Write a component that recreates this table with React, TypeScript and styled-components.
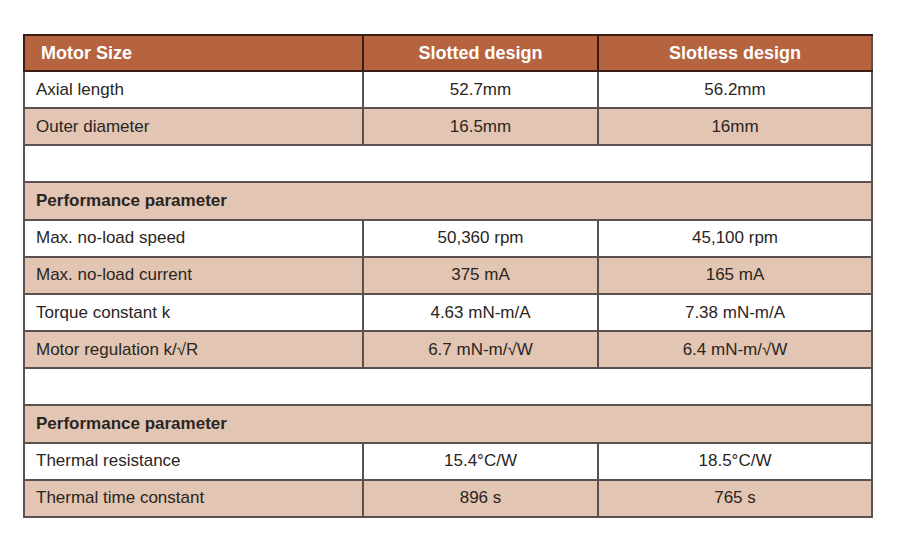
import React from "react";
import styled, { createGlobalStyle } from "styled-components";

const Global = createGlobalStyle`
  html, body { margin: 0; padding: 0; background: #ffffff; }
  body { font-family: "Liberation Sans", Arial, sans-serif; }
`;

const Page = styled.div`
  width: 900px;
  height: 550px;
  box-sizing: border-box;
  padding: 34px 0 0 23px;
`;

const Table = styled.table`
  width: 848px;
  table-layout: fixed;
  border-collapse: collapse;
  border: 2px solid #5a5150;
  color: #2a2523;
`;

const HeadRow = styled.tr`
  height: 36px;
  background: #b6633f;
  border-top: 2px solid #3a1d14;
  border-bottom: 2px solid #3a1d14;
`;

const HeadCell = styled.th<{ $left?: boolean }>`
  color: #ffffff;
  font-size: 18px;
  font-weight: 700;
  text-align: ${(p) => (p.$left ? "left" : "center")};
  padding: 0 0 0 ${(p) => (p.$left ? "16px" : "0")};
  border-left: 2px solid #3a1d14;
`;

const Row = styled.tr<{ $tint?: boolean }>`
  height: 37.17px;
  background: ${(p) => (p.$tint ? "#e2c5b2" : "#ffffff")};
  border-top: 2px solid #5a5150;
`;

const LabelCell = styled.td`
  font-size: 17px;
  padding: 0 0 0 11px;
  text-align: left;
  border-left: 2px solid #5a5150;
`;

const ValueCell = styled.td`
  font-size: 17px;
  text-align: center;
  border-left: 2px solid #5a5150;
`;

const SectionCell = styled.td`
  font-size: 17px;
  font-weight: 700;
  padding: 0 0 0 11px;
`;

type DataRow = [string, string, string];

const group1: DataRow[] = [
  ["Axial length", "52.7mm", "56.2mm"],
  ["Outer diameter", "16.5mm", "16mm"],
];

const group2: DataRow[] = [
  ["Max. no-load speed", "50,360 rpm", "45,100 rpm"],
  ["Max. no-load current", "375 mA", "165 mA"],
  ["Torque constant k", "4.63 mN-m/A", "7.38 mN-m/A"],
  ["Motor regulation k/\u221AR", "6.7 mN-m/\u221AW", "6.4 mN-m/\u221AW"],
];

const group3: DataRow[] = [
  ["Thermal resistance", "15.4\u00B0C/W", "18.5\u00B0C/W"],
  ["Thermal time constant", "896 s", "765 s"],
];

const renderRows = (rows: DataRow[]) =>
  rows.map((r, i) => (
    <Row key={r[0]} $tint={i % 2 === 1}>
      <LabelCell>{r[0]}</LabelCell>
      <ValueCell>{r[1]}</ValueCell>
      <ValueCell>{r[2]}</ValueCell>
    </Row>
  ));

export default function App() {
  return (
    <Page>
      <Global />
      <Table>
        <colgroup>
          <col style={{ width: 339 }} />
          <col style={{ width: 235 }} />
          <col style={{ width: 274 }} />
        </colgroup>
        <thead>
          <HeadRow>
            <HeadCell $left>Motor Size</HeadCell>
            <HeadCell>Slotted design</HeadCell>
            <HeadCell>Slotless design</HeadCell>
          </HeadRow>
        </thead>
        <tbody>
          {renderRows(group1)}
          <Row>
            <SectionCell colSpan={3} />
          </Row>
          <Row $tint>
            <SectionCell colSpan={3}>Performance parameter</SectionCell>
          </Row>
          {renderRows(group2)}
          <Row>
            <SectionCell colSpan={3} />
          </Row>
          <Row $tint>
            <SectionCell colSpan={3}>Performance parameter</SectionCell>
          </Row>
          {renderRows(group3)}
        </tbody>
      </Table>
    </Page>
  );
}
